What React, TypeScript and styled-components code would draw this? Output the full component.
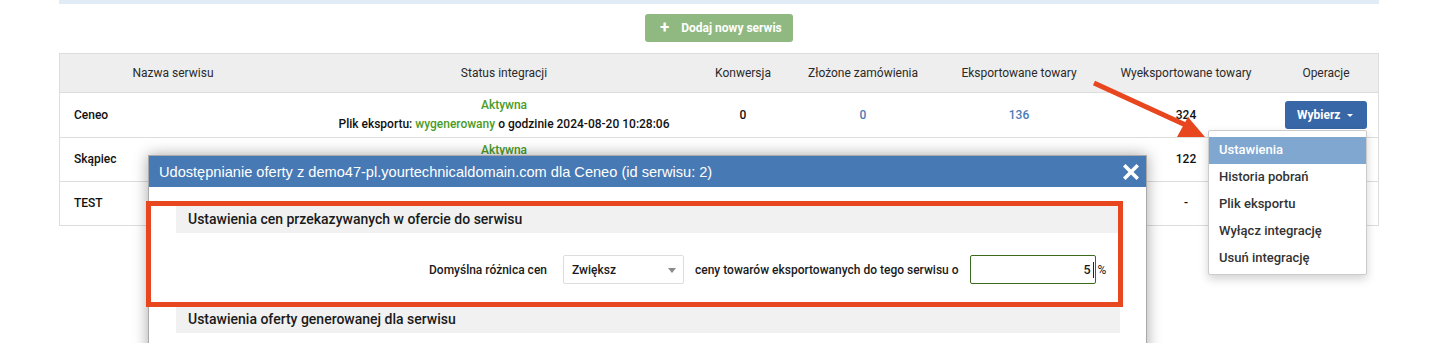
import React from 'react';
import styled, { createGlobalStyle } from 'styled-components';

const GlobalStyle = createGlobalStyle`
  * { box-sizing: border-box; }
  body {
    margin: 0;
    background: #ffffff;
    font-family: Roboto, 'Liberation Sans', sans-serif;
    color: #222222;
  }
`;

const columns = '226px 436px 42px 198px 114px 220px 60px';

interface ServiceRow {
  name: string;
  active: boolean;
  conversion: string;
  orders: string;
  exported: string;
  sent: string;
  height: number;
  menuOpen?: boolean;
}

const rows: ServiceRow[] = [
  { name: 'Ceneo', active: true, conversion: '0', orders: '0', exported: '136', sent: '324', height: 45, menuOpen: true },
  { name: 'Skąpiec', active: true, conversion: '', orders: '', exported: '', sent: '122', height: 44 },
  { name: 'TEST', active: false, conversion: '', orders: '', exported: '', sent: '-', height: 44 },
];

const menuItems = ['Ustawienia', 'Historia pobrań', 'Plik eksportu', 'Wyłącz integrację', 'Usuń integrację'];

const App: React.FC = () => (
  <Page>
    <GlobalStyle />
    <Content>
      <TopBand />
      <ButtonRow>
        <AddButton>
          <Plus>+</Plus>
          Dodaj nowy serwis
        </AddButton>
      </ButtonRow>

      <Table>
        <GridRow $height={39} $head>
          <HeadCell>Nazwa serwisu</HeadCell>
          <HeadCell>Status integracji</HeadCell>
          <HeadCell>Konwersja</HeadCell>
          <HeadCell>Złożone zamówienia</HeadCell>
          <HeadCell>Eksportowane towary</HeadCell>
          <HeadCell>Wyeksportowane towary</HeadCell>
          <HeadCell>Operacje</HeadCell>
        </GridRow>
        {rows.map((row) => (
          <GridRow key={row.name} $height={row.height}>
            <Cell $left>{row.name}</Cell>
            <Cell>
              {row.active ? (
                <>
                  <Green>Aktywna</Green>
                  <span>
                    Plik eksportu: <Green>wygenerowany</Green> o godzinie 2024-08-20 10:28:06
                  </span>
                </>
              ) : (
                <Muted>Nieaktywna</Muted>
              )}
            </Cell>
            <Cell>{row.conversion}</Cell>
            <Cell>
              <Link>{row.orders}</Link>
            </Cell>
            <Cell>
              <Link>{row.exported}</Link>
            </Cell>
            <Cell>{row.sent}</Cell>
            <Cell>
              <MenuWrap>
                <SelectButton>
                  Wybierz <Caret />
                </SelectButton>
                {row.menuOpen && (
                  <Menu>
                    {menuItems.map((item, i) => (
                      <MenuItem key={item} $active={i === 0}>
                        {item}
                      </MenuItem>
                    ))}
                  </Menu>
                )}
              </MenuWrap>
            </Cell>
          </GridRow>
        ))}
      </Table>
    </Content>

    <Modal>
      <ModalHeader>
        <ModalTitle>Udostępnianie oferty z demo47-pl.yourtechnicaldomain.com dla Ceneo (id serwisu: 2)</ModalTitle>
        <CloseIcon width="16" height="16" viewBox="0 0 16 16">
          <path d="M2.5 2.5 L13.5 13.5 M13.5 2.5 L2.5 13.5" stroke="#ffffff" strokeWidth="3.6" strokeLinecap="square" />
        </CloseIcon>
      </ModalHeader>
      <ModalBody>
        <SectionTitle>Ustawienia cen przekazywanych w ofercie do serwisu</SectionTitle>
        <FormRow>
          <FormLabel>Domyślna różnica cen</FormLabel>
          <Select>
            Zwiększ
            <SelectCaret />
          </Select>
          <FormText>ceny towarów eksportowanych do tego serwisu o</FormText>
          <NumberInput>
            5<Cursor />
          </NumberInput>
          <Percent>%</Percent>
        </FormRow>
        <SectionTitle>Ustawienia oferty generowanej dla serwisu</SectionTitle>
      </ModalBody>
    </Modal>

    <Highlight />
    <Arrow width="126" height="62" viewBox="0 0 126 62">
      <line x1="6" y1="5" x2="102" y2="49" stroke="#e8461e" strokeWidth="5" />
      <polygon points="89,59 100,39 117,59" fill="#e8461e" />
    </Arrow>
  </Page>
);

const Page = styled.div`
  position: relative;
  width: 1430px;
  height: 343px;
  overflow: hidden;
`;

const Content = styled.div`
  padding: 0 51px 0 59px;
`;

const TopBand = styled.div`
  height: 4px;
  background: #e0ebf6;
`;

const ButtonRow = styled.div`
  display: flex;
  justify-content: center;
  margin-top: 10px;
`;

const AddButton = styled.div`
  display: flex;
  align-items: center;
  gap: 12px;
  height: 28px;
  width: 148px;
  padding-left: 15px;
  border-radius: 3px;
  background: #8fb981;
  color: #ffffff;
  font-size: 12px;
  font-weight: 700;
`;

const Plus = styled.span`
  font-size: 17px;
  font-weight: 700;
  line-height: 1;
  margin-top: -2px;
`;

const Table = styled.div`
  margin-top: 11px;
  border: 1px solid #dddddd;
  border-bottom: none;
`;

const GridRow = styled.div<{ $height: number; $head?: boolean }>`
  display: grid;
  grid-template-columns: ${columns};
  height: ${(p) => p.$height}px;
  border-bottom: 1px solid #dddddd;
  background: ${(p) => (p.$head ? '#eeeeee' : '#ffffff')};
`;

const HeadCell = styled.div`
  display: flex;
  align-items: center;
  justify-content: center;
  min-width: 0;
  white-space: nowrap;
  font-size: 12px;
  color: #2a2a2a;
`;

const Cell = styled.div<{ $left?: boolean }>`
  display: flex;
  flex-direction: column;
  justify-content: center;
  align-items: ${(p) => (p.$left ? 'flex-start' : 'center')};
  padding-left: ${(p) => (p.$left ? '14px' : '0')};
  min-width: 0;
  white-space: nowrap;
  font-size: 12px;
  font-weight: 500;
  line-height: 19px;
  color: #111111;
`;

const Green = styled.span`
  color: #4b9b26;
`;

const Muted = styled.span`
  color: #999999;
`;

const Link = styled.span`
  color: #4a7bb7;
`;

const MenuWrap = styled.div`
  position: relative;
`;

const SelectButton = styled.div`
  display: flex;
  align-items: center;
  gap: 7px;
  height: 28px;
  width: 82px;
  padding-left: 12px;
  border-radius: 3px;
  background: #3767a6;
  color: #ffffff;
  font-size: 12px;
  font-weight: 700;
`;

const Caret = styled.span`
  width: 0;
  height: 0;
  border-left: 3.5px solid transparent;
  border-right: 3.5px solid transparent;
  border-top: 3.5px solid #ffffff;
`;

const Menu = styled.div`
  position: absolute;
  right: 0;
  top: calc(100% + 1px);
  z-index: 3;
  width: 159px;
  padding: 6px 0 2px;
  background: #ffffff;
  border: 1px solid #cccccc;
  border-radius: 2px;
  box-shadow: 0 4px 10px rgba(0, 0, 0, 0.18);
`;

const MenuItem = styled.div<{ $active?: boolean }>`
  height: 27px;
  line-height: 26px;
  padding: 0 10px;
  font-size: 13px;
  font-weight: 500;
  color: ${(p) => (p.$active ? '#ffffff' : '#333333')};
  background: ${(p) => (p.$active ? '#7fa7d0' : 'transparent')};
`;

const Modal = styled.div`
  position: absolute;
  left: 148px;
  top: 155px;
  z-index: 2;
  width: 999px;
  height: 240px;
  background: #ffffff;
  border: 1px solid #a9a9a9;
  box-shadow: 0 0 14px rgba(0, 0, 0, 0.35);
`;

const ModalHeader = styled.div`
  display: flex;
  align-items: center;
  justify-content: space-between;
  height: 31px;
  padding: 0 7px 0 10px;
  background: #4779b4;
`;

const ModalTitle = styled.div`
  color: #ffffff;
  font-family: 'Liberation Sans', Arial, sans-serif;
  font-size: 14.6px;
`;

const CloseIcon = styled.svg`
  display: block;
`;

const ModalBody = styled.div`
  padding: 19px 26px 0 27px;
`;

const SectionTitle = styled.div`
  height: 27px;
  line-height: 27px;
  padding-left: 12px;
  background: #f1f1f1;
  font-size: 14px;
  font-weight: 500;
  color: #1a1a1a;
`;

const FormRow = styled.div`
  display: flex;
  align-items: center;
  height: 29px;
  margin: 22px 0;
  font-size: 12px;
  font-weight: 500;
  color: #1a1a1a;
`;

const FormLabel = styled.div`
  width: 371px;
  text-align: right;
`;

const Select = styled.div`
  position: relative;
  display: flex;
  align-items: center;
  width: 121px;
  height: 29px;
  margin-left: 16px;
  padding-left: 8px;
  border: 1px solid #dddddd;
  border-radius: 2px;
`;

const SelectCaret = styled.span`
  position: absolute;
  right: 7px;
  top: 12px;
  width: 0;
  height: 0;
  border-left: 4px solid transparent;
  border-right: 4px solid transparent;
  border-top: 5px solid #8a8a8a;
`;

const FormText = styled.div`
  margin-left: 11px;
`;

const NumberInput = styled.div`
  display: flex;
  align-items: center;
  justify-content: flex-end;
  width: 126px;
  height: 29px;
  margin-left: 11px;
  padding-right: 1px;
  border: 1px solid #3b6b1a;
  border-radius: 2px;
  font-size: 12.5px;
`;

const Cursor = styled.span`
  width: 1px;
  height: 16px;
  margin-left: 2px;
  background: #222222;
`;

const Percent = styled.span`
  margin-left: 2px;
  font-weight: 400;
`;

const Highlight = styled.div`
  position: absolute;
  left: 146px;
  top: 201px;
  z-index: 4;
  width: 977px;
  height: 106px;
  border: 5px solid #e8461e;
  pointer-events: none;
`;

const Arrow = styled.svg`
  position: absolute;
  left: 1088px;
  top: 78px;
  z-index: 4;
  pointer-events: none;
`;

export default App;
